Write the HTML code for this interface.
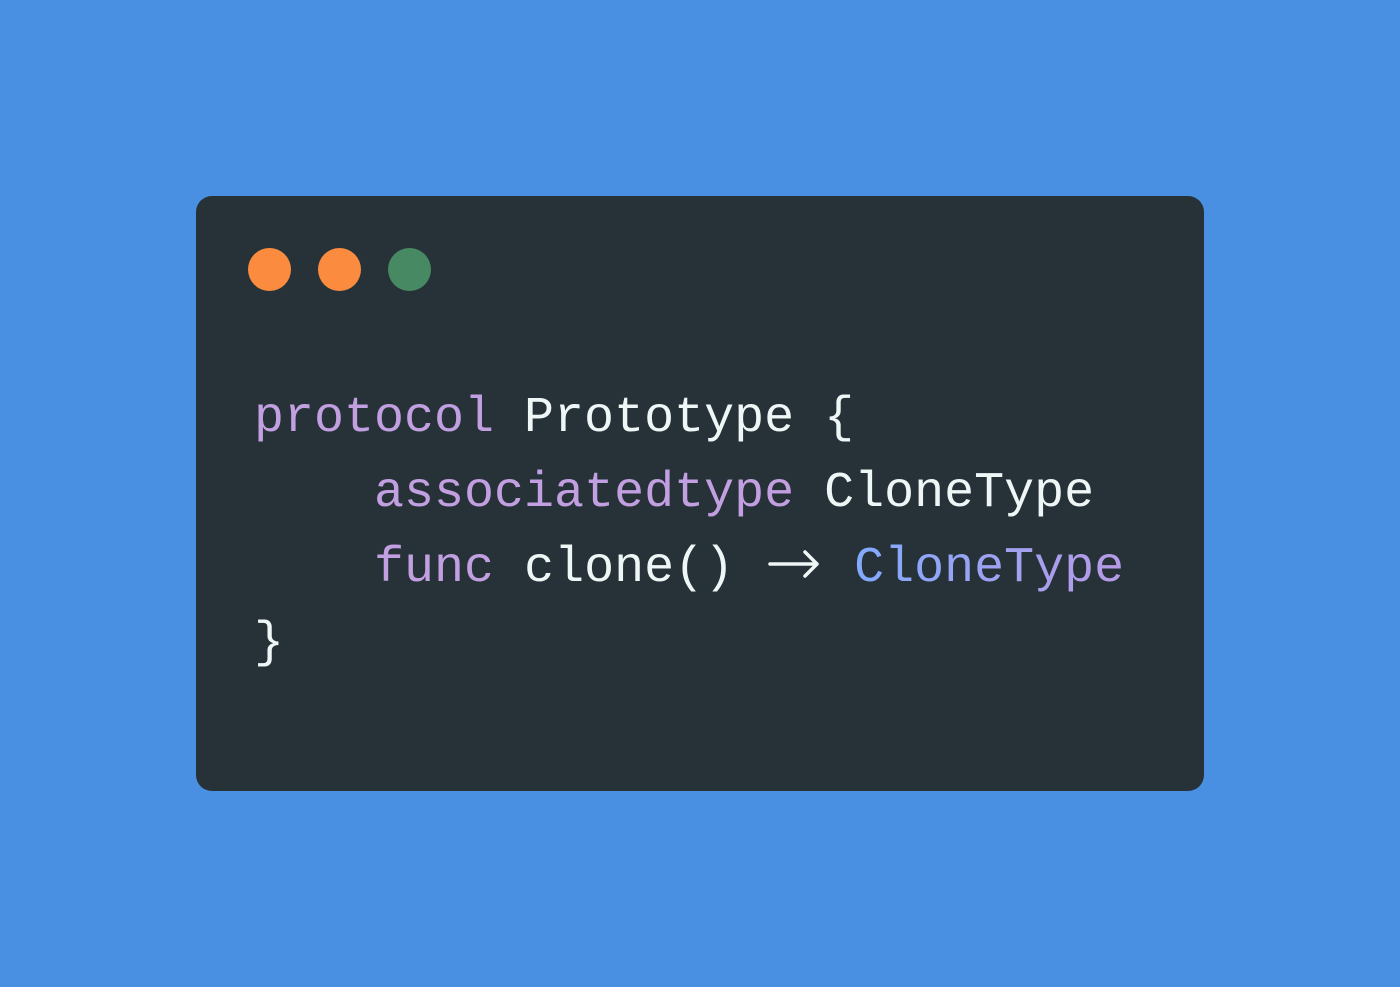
<!DOCTYPE html>
<html><head><meta charset="utf-8"><style>
html,body{margin:0;padding:0;}
body{width:1400px;height:987px;background:#4a90e2;position:relative;overflow:hidden;}
.card{position:absolute;left:196px;top:196px;width:1008px;height:595px;background:#263238;border-radius:16px;}
.dot{position:absolute;top:248px;width:43px;height:43px;border-radius:50%;}
pre{position:absolute;left:254px;top:381px;margin:0;font-family:"Liberation Mono",monospace;font-size:50px;line-height:75px;color:#eef6f6;}
.k{color:#c29fe0;}
.t{background:linear-gradient(90deg,#82aaff,#b89ae6);-webkit-background-clip:text;background-clip:text;color:transparent;}
svg{display:inline-block;vertical-align:-3px;}
</style></head><body>
<div class="card"></div>
<div class="dot" style="left:248px;background:#fb8c3f"></div>
<div class="dot" style="left:318px;background:#fb8c3f"></div>
<div class="dot" style="left:388px;background:#468962"></div>
<pre><span class="k">protocol</span> Prototype {
    <span class="k">associatedtype</span> CloneType
    <span class="k">func</span> clone() <svg width="60" height="40" viewBox="0 0 60 40"><path d="M6 20H53M41 8L53 20L41 32" fill="none" stroke="#eef6f6" stroke-width="3.5" stroke-linecap="round" stroke-linejoin="round"/></svg> <span class="t">CloneType</span>
}</pre>
</body></html>
